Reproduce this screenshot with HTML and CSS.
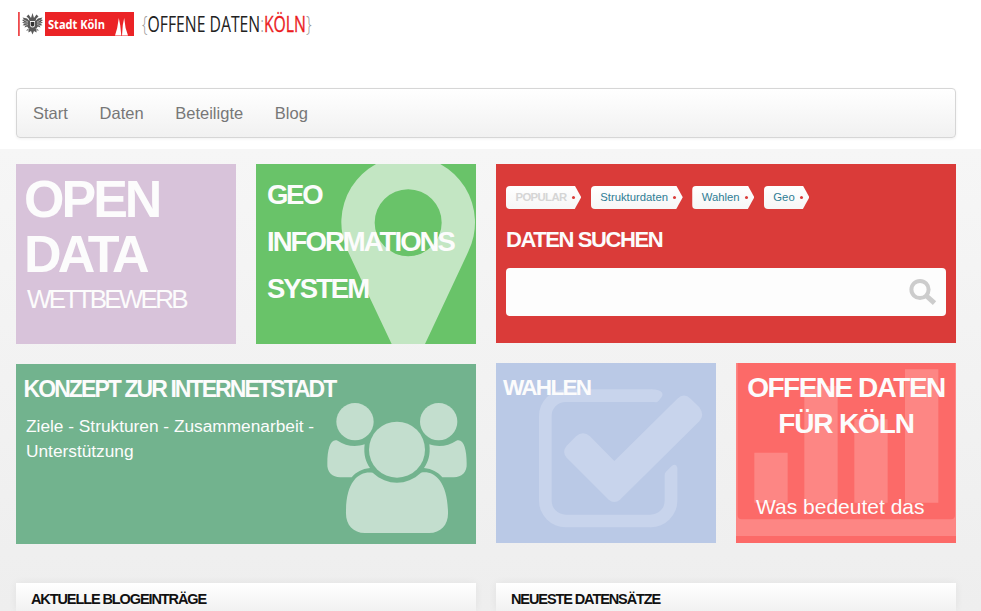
FILE: index.html
```html
<!DOCTYPE html>
<html lang="de">
<head>
<meta charset="utf-8">
<title>Offene Daten Köln</title>
<link rel="stylesheet" href="styles.css">
</head>
<body>
<header class="header">
  <svg class="logo" viewBox="0 0 330 50" aria-label="Stadt Köln Offene Daten">
    <rect x="18" y="12" width="1.8" height="24" fill="#ee4a4c"/>
    <g fill="#333">
      <path d="M31 18 28.5 14.5 26.5 16.5 28.7 18.6 29.5 21 27 18.500 22.500 17.500 24 19.500 22 20 24.200 21.700 22 22.700 24.600 23.600 22.600 25.200 25.500 25.400 24.500 27.500 27.200 26.600 28.600 28.500 26 30.500 28.500 30.500 28.500 32.500 31 31 32.500 34.500 34 31 36.500 32.500 36.500 30.500 39 30.500 36.400 28.500 37.800 26.600 40.500 27.500 39.500 25.400 42.400 25.200 40.400 23.600 43 22.700 40.800 21.700 43 20 41 19.500 42.500 17.500 38 18.500 35.500 21 36.300 18.600 38.500 16.500 36.500 14.500 34 18 32.500 13Z" opacity=".82"/>
      <path d="M30 21h5v5q-2.500 3-5 0z" fill="#f4f4f4"/>
      <path d="M30.700 22h3.600v3.500q-1.800 2-3.600 0z"/>
    </g>
    <g stroke="#fff" stroke-width=".7" opacity=".7"><path d="m24 20 4 2m-4 1h4m-3 2.500 3-1m12.500-4.500-3.500 2m4 1h-4m3 2.500-3-1M29 28l-1 3m8-3 1 3"/></g>
    <rect x="45" y="12" width="89" height="24" fill="#eb2326"/>
    <text x="48" y="28.500" class="logo-city" textLength="57" lengthAdjust="spacingAndGlyphs">Stadt Köln</text>
    <path d="M115 35.500 117.200 28 118.800 18 120.200 25 121.300 35.500ZM122 35.500 122.800 25 124.200 18 125.600 28 128 35.500Z" fill="#fff"/>
    <text x="142" y="32" class="logo-name" textLength="169.500" lengthAdjust="spacingAndGlyphs"><tspan class="logo-brace">{</tspan>OFFENE DATEN<tspan class="logo-brace">:</tspan><tspan class="logo-red">KÖLN</tspan><tspan class="logo-brace">}</tspan></text>
  </svg>
  <nav class="navbar">
    <a>Start</a><a>Daten</a><a>Beteiligte</a><a>Blog</a>
  </nav>
</header>
<main class="main">
  <div class="columns">
    <div class="column">
      <div class="row">
        <section class="tile tile-purple">
          <h2 class="open">OPEN</h2>
          <h2 class="open data">DATA</h2>
          <p class="contest">WETTBEWERB</p>
        </section>
        <section class="tile tile-green">
          <svg class="backdrop" viewBox="33 27 660 540"><path fill-rule="evenodd" d="M440 567 310 292A200.500 200.500 0 1 1 669 292L540 567ZM389 203a100.500 100.500 0 1 0 201 0a100.500 100.500 0 1 0-201 0Z" fill="#c3e6c3"/></svg>
          <h2 class="geo">GEO</h2>
          <h2 class="geo geo-2">INFORMATIONS</h2>
          <h2 class="geo geo-3">SYSTEM</h2>
        </section>
      </div>
      <section class="tile wide tile-teal">
        <svg class="backdrop" viewBox="-882 27 1380 540" fill="#c3dece">
          <circle cx="135" cy="200" r="56"/><circle cx="386" cy="200" r="56"/><circle cx="261" cy="284" r="84"/>
          <path d="M188 353C150 347 108 375 108 470C106 508 128 534 165 534H357C394 534 416 508 414 470C412 375 370 346 333 353C290 393 232 393 188 353Z"/>
          <path id="side" d="M83 257C62 249 52 280 52 325C50 352 68 367 90 367H125C140 350 155 342 180 339C168 322 160 300 164 268C135 277 107 273 83 257Z"/>
          <use href="#side" transform="translate(522 0) scale(-1 1)"/>
        </svg>
        <h2 class="konzept">KONZEPT ZUR INTERNETSTADT</h2>
        <p class="lead">Ziele - Strukturen - Zusammenarbeit -<br>Unterstützung</p>
      </section>
    </div>
    <div class="column">
      <section class="tile wide tile-red">
        <div class="tags">
          <span class="tag tag-label">POPULAR</span><a class="tag">Strukturdaten</a><a class="tag">Wahlen</a><a class="tag">Geo</a>
        </div>
        <h2 class="search-title">DATEN SUCHEN</h2>
        <div class="search">
          <svg width="28" height="28" viewBox="0 0 28 28" fill="none" stroke="#ccc"><circle cx="11" cy="11.500" r="8.600" stroke-width="4"/><path d="m17 17.500 8.500 7.700" stroke-width="5"/></svg>
        </div>
      </section>
      <div class="row">
        <section class="tile tile-blue">
          <svg class="backdrop" viewBox="33 24 660 540" fill="#c8d4ec">
            <path d="M500 103H242A80 80 0 0 0 162 183V437A80 80 0 0 0 242 517H497A80 80 0 0 0 577 437V338Q574 324 560 333L543 350Q539 354 539 360V437A42 42 0 0 1 497 479H242A42 42 0 0 1 200 437V183A42 42 0 0 1 242 141H508Q516 143 521 137L530 126Q538 112 520 106Q510 103 500 103Z"/>
            <path d="M388 318 577 131Q597 112 617 131L643 157Q660 180 643 199L405 434Q388 448 371 434L245 308Q230 290 245 272L273 244Q294 226 315 244Z"/>
          </svg>
          <h2 class="wahlen">WAHLEN</h2>
        </section>
        <section class="tile tile-coral">
          <svg class="backdrop" viewBox="33 24 660 540" fill="#fd8684"><path d="M88 293h100v150H88zM238 93h100v350H238zM388 193h100v250H388zM540 43h100v400H540zM33 24h5v457q0 12 12 12h628q12 0 12-12V24h3v519H33z"/></svg>
          <h2 class="offene">OFFENE DATEN</h2>
          <h2 class="offene offene-2">FÜR KÖLN</h2>
          <p class="question">Was bedeutet das</p>
        </section>
      </div>
    </div>
  </div>
  <div class="panels">
    <section class="panel"><h3>AKTUELLE BLOGEINTRÄGE</h3></section>
    <section class="panel"><h3>NEUESTE DATENSÄTZE</h3></section>
  </div>
</main>
</body>
</html>
```
FILE: styles.css
```css
* { box-sizing: border-box; }
body {
  display: flex;
  flex-direction: column;
  height: 611px;
  margin: 0;
  background: #fff;
  font-family: "Liberation Sans", Arial, sans-serif;
}
h2, h3, p { margin: 0; }

.header { flex: none; height: 149px; padding: 0 25px 0 16px; }
.logo { display: block; width: 330px; height: 50px; margin-left: -16px; }
.logo-city { font: 700 12.5px "Open Sans", sans-serif; fill: #fff; }
.logo-name { font: 400 21.5px "Open Sans", sans-serif; fill: #222; }
.logo-red { fill: #eb1c1f; stroke: #eb1c1f; stroke-width: .35px; }
.logo-brace { font-weight: 300; fill: #999; }

.navbar {
  display: flex;
  gap: 31.7px;
  height: 50px;
  margin-top: 38px;
  padding-left: 16px;
  border: 1px solid #d6d6d6;
  border-radius: 4px;
  background: linear-gradient(#fff, #f1f1f1);
  box-shadow: 0 1px 3px rgba(0, 0, 0, .06);
  font-size: 16.5px;
  line-height: 49px;
  color: #777;
}

.main {
  display: flex;
  flex-direction: column;
  flex: 1;
  min-height: 0;
  padding: 15px 25px 0 16px;
  background: linear-gradient(#f6f6f6, #eee);
}
.columns, .row, .panels { display: flex; gap: 20px; }
.column { display: flex; flex-direction: column; gap: 20px; width: 460px; }
.tile { position: relative; width: 220px; height: 180px; color: #fcfcfc; overflow: hidden; }
.tile > * { position: relative; }
.tile .backdrop { position: absolute; top: 0; left: 0; width: 100%; height: 100%; }
.wide { width: 460px; }

.tile-purple { background: #d8c3da; padding: 7.5px 0 0 8px; }
.open { font-size: 52px; line-height: 55px; letter-spacing: -3px; }
.data { letter-spacing: -3.7px; }
.contest { font-size: 26px; line-height: 34px; letter-spacing: -2.75px; padding-left: 3px; }

.tile-green { background: #69c369; padding: 7px 0 0 11px; }
.geo { font-size: 27.5px; line-height: 47px; letter-spacing: -2.3px; white-space: nowrap; }
.geo-2 { letter-spacing: -1.95px; }
.geo-3 { letter-spacing: -2px; }

.tile-teal { background: #72b38e; padding: 9.5px 0 0 7.5px; }
.konzept { font-size: 23px; line-height: 30px; letter-spacing: -1.92px; }
.lead { margin-top: 10px; padding-left: 2.5px; font-size: 17.3px; line-height: 25px; }

.tile-red { height: 179px; background: #da3b39; padding: 21.5px 10px 0; }
.tags { display: flex; gap: 9.5px; }
.tag {
  display: flex;
  align-items: center;
  height: 23.5px;
  padding: 0 6.7px 0 9.5px;
  border-radius: 4px 0 0 4px;
  background: linear-gradient(#fff, #f6f6f6);
  clip-path: polygon(0 0, calc(100% - 6.5px) 0, 100% 50%, calc(100% - 6.5px) 100%, 0 100%);
  color: #2f7d95;
  font-size: 11.3px;
}
.tag::after { content: ""; width: 3px; height: 3px; margin-left: 5px; border-radius: 50%; background: #da3b39; }
.tag-label { color: #d5d5d5; font-weight: bold; letter-spacing: -.6px; }
.search-title { margin-top: 15.5px; font-size: 22px; line-height: 30px; letter-spacing: -1.42px; }
.search {
  display: flex;
  align-items: center;
  justify-content: flex-end;
  height: 48px;
  margin-top: 13px;
  padding-right: 9px;
  border-radius: 4px;
  background: #fdfdfd;
}

.tile-blue { background: #bac9e6; padding: 10px 0 0 7px; }
.wahlen { font-size: 22.5px; line-height: 30px; letter-spacing: -1.7px; }

.tile-coral { background: #fc6a68; padding-top: 7px; text-align: center; }
.offene { font-size: 28px; line-height: 36px; letter-spacing: -1.5px; white-space: nowrap; }
.offene-2 { letter-spacing: -1.15px; }
.question { margin-top: 51px; padding-left: 20px; font-size: 21px; line-height: 28px; text-align: left; }

.panels { flex: 1; min-height: 0; margin-top: 39px; }
.panel {
  width: 460px;
  padding: 5.5px 15px 0;
  background: linear-gradient(#fff, #f1f1f1);
  box-shadow: 0 0 8px rgba(0, 0, 0, .06);
}
.panel h3 { font-size: 14.5px; line-height: 20px; letter-spacing: -1.1px; color: #111; }
```
